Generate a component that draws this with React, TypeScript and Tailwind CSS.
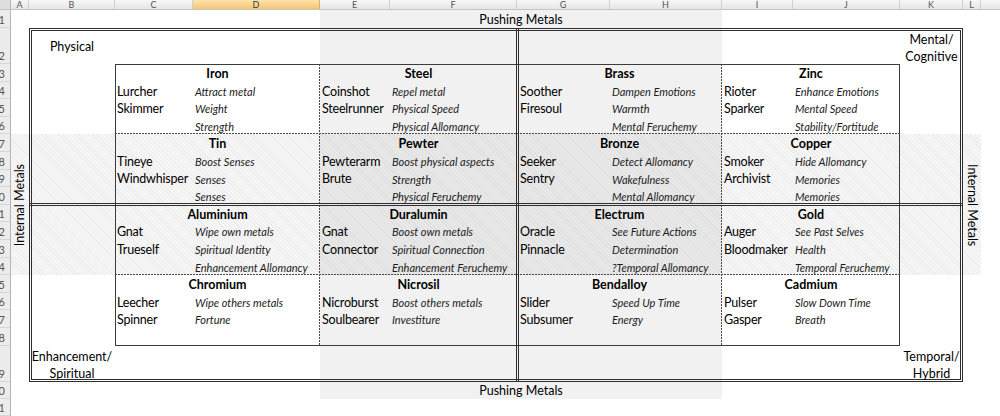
const colHeads: [string, string][] = [
  ['A', 'w-[18px]'],
  ['B', 'w-[86px]'],
  ['C', 'w-[78px]'],
  ['D', 'w-[127px]'],
  ['E', 'w-[70px]'],
  ['F', 'w-[127px]'],
  ['G', 'w-[93px]'],
  ['H', 'w-[112px]'],
  ['I', 'w-[71px]'],
  ['J', 'w-[107px]'],
  ['K', 'w-[63px]'],
  ['L', 'w-[18px]'],
];

const rowHeight = (n: number) => {
  if (n === 1) return 'h-[18px]';
  if (n === 2 || n === 19) return 'h-[36px]';
  if (n === 21) return 'flex-1';
  return 'h-[17.6px]';
};

type Metal = { name: string; lines: [string, string][] };

const metals: Metal[] = [
  { name: 'Iron', lines: [['Lurcher', 'Attract metal'], ['Skimmer', 'Weight'], ['', 'Strength']] },
  { name: 'Steel', lines: [['Coinshot', 'Repel metal'], ['Steelrunner', 'Physical Speed'], ['', 'Physical Allomancy']] },
  { name: 'Brass', lines: [['Soother', 'Dampen Emotions'], ['Firesoul', 'Warmth'], ['', 'Mental Feruchemy']] },
  { name: 'Zinc', lines: [['Rioter', 'Enhance Emotions'], ['Sparker', 'Mental Speed'], ['', 'Stability/Fortitude']] },
  { name: 'Tin', lines: [['Tineye', 'Boost Senses'], ['Windwhisper', 'Senses'], ['', 'Senses']] },
  { name: 'Pewter', lines: [['Pewterarm', 'Boost physical aspects'], ['Brute', 'Strength'], ['', 'Physical Feruchemy']] },
  { name: 'Bronze', lines: [['Seeker', 'Detect Allomancy'], ['Sentry', 'Wakefulness'], ['', 'Mental Allomancy']] },
  { name: 'Copper', lines: [['Smoker', 'Hide Allomancy'], ['Archivist', 'Memories'], ['', 'Memories']] },
  { name: 'Aluminium', lines: [['Gnat', 'Wipe own metals'], ['Trueself', 'Spiritual Identity'], ['', 'Enhancement Allomancy']] },
  { name: 'Duralumin', lines: [['Gnat', 'Boost own metals'], ['Connector', 'Spiritual Connection'], ['', 'Enhancement Feruchemy']] },
  { name: 'Electrum', lines: [['Oracle', 'See Future Actions'], ['Pinnacle', 'Determination'], ['', '?Temporal Allomancy']] },
  { name: 'Gold', lines: [['Auger', 'See Past Selves'], ['Bloodmaker', 'Health'], ['', 'Temporal Feruchemy']] },
  { name: 'Chromium', lines: [['Leecher', 'Wipe others metals'], ['Spinner', 'Fortune'], ['', '']] },
  { name: 'Nicrosil', lines: [['Nicroburst', 'Boost others metals'], ['Soulbearer', 'Investiture'], ['', '']] },
  { name: 'Bendalloy', lines: [['Slider', 'Speed Up Time'], ['Subsumer', 'Energy'], ['', '']] },
  { name: 'Cadmium', lines: [['Pulser', 'Slow Down Time'], ['Gasper', 'Breath'], ['', '']] },
];

const colStart = ['col-start-3', 'col-start-5', 'col-start-7', 'col-start-9'];
const rowStart = ['row-start-3', 'row-start-7', 'row-start-11', 'row-start-15'];
const nameWidth = ['w-[78px] pl-[2px]', 'w-[70px] pl-[2px]', 'w-[93px] pl-[3px]', 'w-[71px] pl-[2px]'];

const MetalBlock = ({ metal, index }: { metal: Metal; index: number }) => {
  const c = index % 4;
  const r = Math.floor(index / 4);
  return (
    <div className={`${colStart[c]} ${rowStart[r]} col-span-2 row-span-4 flex flex-col`}>
      <div className="flex h-[17.6px] items-center justify-center pt-[3px] font-bold">{metal.name}</div>
      {metal.lines.map(([who, what], i) => (
        <div key={i} className="flex h-[17.6px] items-center whitespace-nowrap pt-[3px]">
          <span className={`${nameWidth[c]} tracking-[-0.2px]`}>{who}</span>
          <span className="pl-[2px] text-[11px] italic text-[#1c1c1c]">{what}</span>
        </div>
      ))}
    </div>
  );
};

export default function App() {
  return (
    <div className="flex h-[416px] w-[1000px] flex-col overflow-hidden bg-white font-['Lato',sans-serif] text-[12.5px] text-black">
      {/* column headers */}
      <div className="flex h-[10px] border-b border-[#c4c4c4]">
        <div className="w-[11px] border-r border-[#b5b5b5] bg-[#dedede]" />
        {colHeads.map(([label, w]) => (
          <div
            key={label}
            className={`${w} flex justify-center border-r text-[9px] leading-[9px] ${
              label === 'D'
                ? 'border-[#e2b05a] bg-linear-to-b from-[#fde3ad] to-[#f6c571] text-[#3a3a3a]'
                : 'border-[#d0d0d0] bg-linear-to-b from-[#f7f7f7] to-[#e6e6e6] text-[#555]'
            }`}
          >
            {label}
          </div>
        ))}
        <div className="flex-1 bg-linear-to-b from-[#f7f7f7] to-[#e6e6e6]" />
      </div>

      <div className="flex flex-1">
        {/* row headers */}
        <div className="flex w-[11px] flex-col border-r border-[#b5b5b5] bg-[#ececec]">
          {Array.from({ length: 21 }, (_, i) => i + 1).map((n) => (
            <div
              key={n}
              className={`${rowHeight(n)} flex items-end justify-end overflow-hidden whitespace-nowrap border-b border-[#d6d6d6] pr-[5px] pb-[1px] text-[11px] leading-[13px] text-[#555]`}
            >
              {n}
            </div>
          ))}
        </div>

        {/* sheet */}
        <div className="grid flex-1 grid-cols-[18px_86px_78px_127px_70px_127px_93px_112px_71px_107px_63px_18px_1fr] grid-rows-[18px_36px_repeat(16,17.6px)_36px_17.6px_1fr]">
          {/* fills */}
          <div className="col-start-5 col-end-9 row-start-1 row-end-21 bg-[#f1f1f1]" />
          <div className="col-start-1 col-end-13 row-start-7 row-end-15 bg-[image:repeating-linear-gradient(45deg,rgba(0,0,0,0.075)_0px,rgba(0,0,0,0.075)_1px,rgba(0,0,0,0.035)_1px,rgba(0,0,0,0.035)_3px)]" />

          {/* table lines */}
          <div className="col-start-3 col-end-11 row-start-3 row-end-19 border border-[#3c3c3c]" />
          <div className="col-start-5 row-start-3 row-end-19 w-px -ml-px justify-self-start bg-[image:repeating-linear-gradient(180deg,#4a4a4a_0px,#4a4a4a_2px,transparent_2px,transparent_3px)]" />
          <div className="col-start-9 row-start-3 row-end-19 w-px -ml-px justify-self-start bg-[image:repeating-linear-gradient(180deg,#4a4a4a_0px,#4a4a4a_2px,transparent_2px,transparent_3px)]" />
          <div className="col-start-3 col-end-11 row-start-7 h-px -mt-px self-start bg-[image:repeating-linear-gradient(90deg,#4a4a4a_0px,#4a4a4a_2px,transparent_2px,transparent_3px)]" />
          <div className="col-start-3 col-end-11 row-start-15 h-px -mt-px self-start bg-[image:repeating-linear-gradient(90deg,#4a4a4a_0px,#4a4a4a_2px,transparent_2px,transparent_3px)]" />

          {/* double lines */}
          <div className="col-start-2 col-end-12 row-start-2 row-end-20 border-[3px] border-double border-[#2e2e2e]" />
          <div className="col-start-7 row-start-2 row-end-20 w-[3px] -ml-px justify-self-start border-l-[3px] border-double border-[#2e2e2e]" />
          <div className="col-start-2 col-end-12 row-start-11 h-[3px] -mt-[2px] self-start border-t-[3px] border-double border-[#2e2e2e]" />

          {/* labels */}
          <div className="col-start-5 col-end-9 row-start-1 flex items-center justify-center pt-[2px]">Pushing Metals</div>
          <div className="col-start-5 col-end-9 row-start-20 flex items-center justify-center pt-[2px]">Pushing Metals</div>
          <div className="col-start-2 row-start-2 flex items-center justify-center pt-[3px]">Physical</div>
          <div className="col-start-11 row-start-2 flex flex-col items-center justify-center pt-[3px] leading-[17px]">
            <span>Mental/</span>
            <span>Cognitive</span>
          </div>
          <div className="col-start-2 row-start-19 flex flex-col items-center justify-center whitespace-nowrap pt-[2px] leading-[17px]">
            <span>Enhancement/</span>
            <span>Spiritual</span>
          </div>
          <div className="col-start-11 row-start-19 flex flex-col items-center justify-center pt-[2px] leading-[17px]">
            <span>Temporal/</span>
            <span>Hybrid</span>
          </div>
          <div className="col-start-1 row-start-7 row-end-15 self-center justify-self-center rotate-180 whitespace-nowrap [writing-mode:vertical-rl]">
            Internal Metals
          </div>
          <div className="col-start-12 row-start-7 row-end-15 self-center justify-self-center whitespace-nowrap [writing-mode:vertical-rl]">
            Internal Metals
          </div>

          {metals.map((m, i) => (
            <MetalBlock key={m.name} metal={m} index={i} />
          ))}
        </div>
      </div>
    </div>
  );
}
